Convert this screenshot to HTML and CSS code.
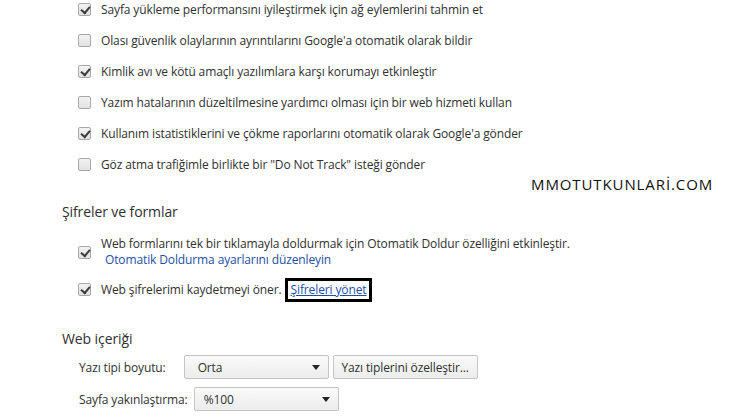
FILE: index.html
```html
<!DOCTYPE html>
<html lang="tr">
<head>
<meta charset="utf-8">
<link rel="stylesheet" href="styles.css">
</head>
<body>
<div class="page">
  <div class="checks">
    <div class="row"><span class="cb on"></span><span>Sayfa yükleme performansını iyileştirmek için ağ eylemlerini tahmin et</span></div>
    <div class="row"><span class="cb"></span><span>Olası güvenlik olaylarının ayrıntılarını Google'a otomatik olarak bildir</span></div>
    <div class="row"><span class="cb on"></span><span>Kimlik avı ve kötü amaçlı yazılımlara karşı korumayı etkinleştir</span></div>
    <div class="row"><span class="cb"></span><span>Yazım hatalarının düzeltilmesine yardımcı olması için bir web hizmeti kullan</span></div>
    <div class="row"><span class="cb on"></span><span>Kullanım istatistiklerini ve çökme raporlarını otomatik olarak Google'a gönder</span></div>
    <div class="row"><span class="cb"></span><span>Göz atma trafiğimle birlikte bir "Do Not Track" isteği gönder</span></div>
  </div>

  <h2 class="heading h-forms">Şifreler ve formlar</h2>
  <div class="forms">
    <div class="row2">
      <span class="cb on"></span>
      <div class="lines">
        <span>Web formlarını tek bir tıklamayla doldurmak için Otomatik Doldur özelliğini etkinleştir.</span>
        <a class="link plain">Otomatik Doldurma ayarlarını düzenleyin</a>
      </div>
    </div>
    <div class="row row3"><span class="cb on"></span><span>Web şifrelerimi kaydetmeyi öner.</span><span class="boxed"><a class="link ul">Şifreleri yönet</a></span></div>
  </div>

  <h2 class="heading h-web">Web içeriği</h2>
  <div class="web">
    <div class="field">
      <span class="label">Yazı tipi boyutu:</span>
      <span class="select s1">Orta<span class="arrow"></span></span>
      <span class="btn">Yazı tiplerini özelleştir...</span>
    </div>
    <div class="field">
      <span class="label">Sayfa yakınlaştırma:</span>
      <span class="select s2">%100<span class="arrow"></span></span>
    </div>
  </div>
</div>
<div class="watermark">MMOTUTKUNLARİ.COM</div>
</body>
</html>
```
FILE: styles.css
```css
html, body { margin: 0; padding: 0; background: #fff; }
body {
  width: 739px; height: 419px; overflow: hidden; position: relative;
  font-family: "Open Sans", "Noto Sans", sans-serif;
  font-size: 12px; color: #303030; letter-spacing: -0.12px;
}
.page { padding-left: 62px; }
.checks { display: flex; flex-direction: column; gap: 12px; padding-left: 16px; }
.row { display: flex; align-items: center; height: 19px; white-space: nowrap; }
.cb {
  flex: none; width: 13px; height: 13px; box-sizing: border-box;
  border: 1px solid #a8a8a8; border-radius: 2px;
  background: linear-gradient(#f2f2f2, #e2e2e2);
  margin-right: 10px; position: relative;
}
.cb.on::after {
  content: ""; position: absolute; left: 2px; top: 0px;
  width: 7px; height: 4px;
  border-left: 2.5px solid #3c3c3c; border-bottom: 2.5px solid #3c3c3c;
  transform: translate(0, 2px) rotate(-50deg);
}
.heading { margin: 0; font-weight: normal; font-size: 14px; line-height: 20px; color: #303030; letter-spacing: -0.1px; }
.h-forms { margin-top: 28px; }
.forms { padding-left: 16px; margin-top: 14px; }
.row2 { display: flex; align-items: center; }
.lines { display: flex; flex-direction: column; line-height: 16px; }
.lines .link { padding-left: 4px; }
.link { color: #1e4fa8; }
.row3 { margin-top: 12px; }
.boxed { margin-left: 3px; border: 3px solid #000; padding: 1px 3px; line-height: 16px; }
.ul { text-decoration: underline; }
.h-web { margin-top: 30px; }
.web { padding-left: 17px; margin-top: 6px; display: flex; flex-direction: column; gap: 8px; }
.field { display: flex; align-items: center; height: 24px; }
.label { white-space: nowrap; }
.select, .btn {
  box-sizing: border-box; height: 24px; display: flex; align-items: center;
  border: 1px solid #c4c4c4; border-radius: 2px;
  background: linear-gradient(#fafafa, #ececec);
  position: relative;
}
.select { width: 145px; padding-left: 13px; }
.s1 { margin-left: 18px; }
.s2 { margin-left: 6px; padding-left: 9px; }
.arrow {
  position: absolute; right: 8px; top: 9px;
  border-left: 4px solid transparent; border-right: 4px solid transparent;
  border-top: 5px solid #222;
}
.btn { margin-left: 4px; width: 145px; justify-content: center; }
.watermark {
  position: absolute; left: 531px; top: 174px;
  font-family: "Open Sans", sans-serif; font-size: 15px; color: #111;
  letter-spacing: 0.9px;
}
```
